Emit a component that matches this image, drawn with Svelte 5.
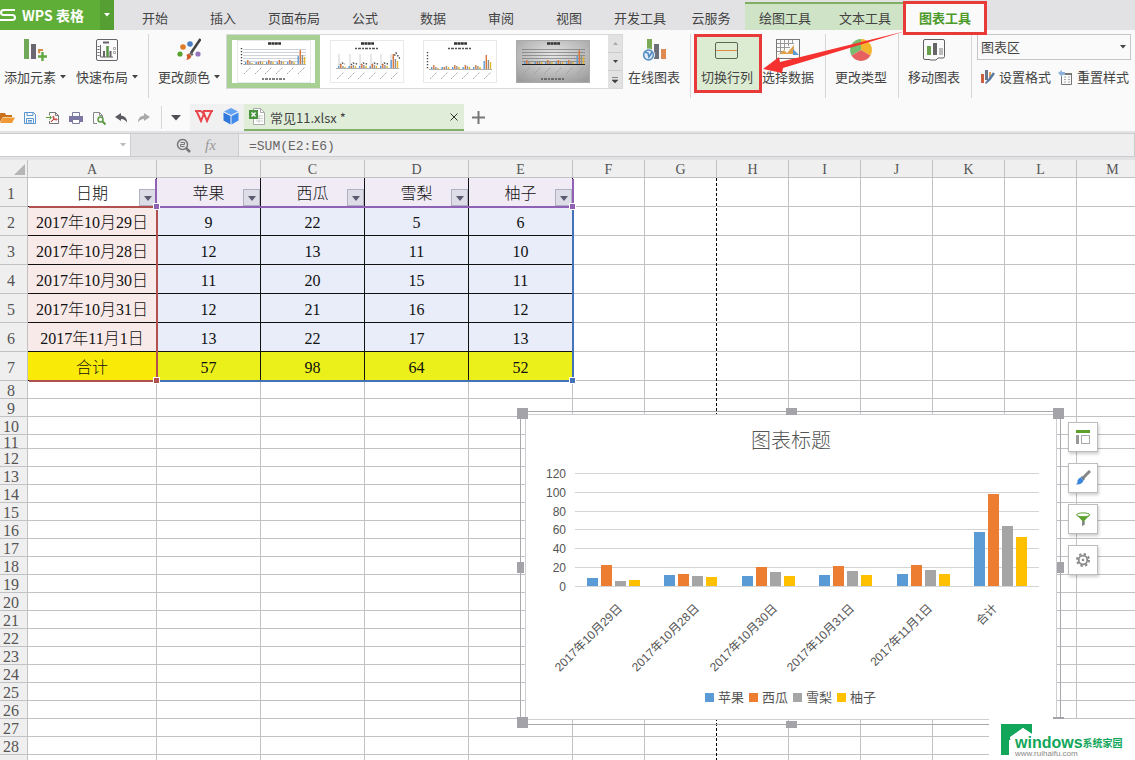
<script>
let tabs = ['开始', '插入', '页面布局', '公式', '数据', '审阅', '视图', '开发工具', '云服务'];
let toolTabs = ['绘图工具', '文本工具', '图表工具'];
let activeTab = $state('图表工具');

let nameBox = $state('');
let formula = $state('=SUM(E2:E6)');
let chartPart = $state('图表区');
let layout = $state(0);

let columns = ['A', 'B', 'C', 'D', 'E', 'F', 'G', 'H', 'I', 'J', 'K', 'L', 'M'];
let head = ['日期', '苹果', '西瓜', '雪梨', '柚子'];
let records = [
    ['2017年10月29日', 9, 22, 5, 6],
    ['2017年10月28日', 12, 13, 11, 10],
    ['2017年10月30日', 11, 20, 15, 11],
    ['2017年10月31日', 12, 21, 16, 12],
    ['2017年11月1日', 13, 22, 17, 13],
    ['合计', 57, 98, 64, 52]
];
let rest = columns.slice(5);
let emptyRows = [...Array.from({ length: 21 }, (_, i) => i + 8), ''];

// chart
let colors = ['#5b9bd5', '#ed7d31', '#a5a5a5', '#ffc000'];
let ticks = [120, 100, 80, 60, 40, 20, 0];
const base = 171;
const unit = 113 / 120;
const groupX = (i) => 61 + Math.round(i * 77.4);
const barH = (v) => Math.round(v * unit);
const labelX = (i) => groupX(i) + (i === records.length - 1 ? 24 : 36);

// bars of the small previews in the gallery
let mini = [2, 4, 2, 1, 0, 2, 2, 3, 2, 0, 2, 4, 3, 2, 0, 2, 4, 3, 2, 0, 2, 4, 3, 2, 0, 8, 14, 9, 7];
let miniColors = ['#5b9bd5', '#d9773a', '#8f8f8f', '#e5b52c', '#fff'];
</script>

{#snippet caret()}
    <svg class="caret" width="6" height="4" viewBox="0 0 6 4"><path d="M0 0h6L3 3.5z" fill="#444" /></svg>
{/snippet}

{#snippet thumb(kind)}
    <svg width="74" height="43" viewBox="0 0 74 43">
        <defs>
            <radialGradient id="grey" cx="50%" cy="35%" r="75%">
                <stop offset="0" stop-color="#e6e6e6" />
                <stop offset="1" stop-color="#9c9c9c" />
            </radialGradient>
        </defs>
        <rect x=".5" y=".5" width="73" height="42" fill={kind === 3 ? 'url(#grey)' : '#fff'} stroke={kind === 3 ? '#aaa' : '#e9e9e9'} />
        <path d="M31 3.5h13" stroke="#333" stroke-width="2.4" stroke-dasharray="3 .4" />
        {#if kind === 1 || kind === 2}
            <path d="M25 8.500h24" stroke="#555" stroke-width="1.400" stroke-dasharray="2 1 3 1" />
        {/if}
        {#if kind === 0 || kind === 3}
            {#each [9, 12, 15, 18, 21] as y}
                <path d="M6 {y + .5}h63" stroke={kind === 3 ? '#777' : '#b9c0cc'} stroke-width=".7" />
            {/each}
            <path d="M25 39h24" stroke="#555" stroke-width="1.400" stroke-dasharray="2 1 3 1" />
        {/if}
        {#if kind === 0 || kind === 2}
            <path d="M4.500 {kind === 2 ? 12 : 8}v18" stroke="#444" stroke-width="1.400" stroke-dasharray="1.200 1.800" />
        {/if}
        {#if kind === 1}
            {#each [9, 20, 30, 41, 51, 61] as x}
                <path d="M{x} 14v14" stroke="#bbb" stroke-width=".7" />
            {/each}
            <path d="M10 25l2-2 3 1M21 25l2-2 4 1M31 25l2-2 4 1M42 25l2-2 4 1M52 25l2-2 4 1M63 18l3-5 4 6" stroke="#444" fill="none" stroke-width="1.400" stroke-dasharray="1.400 1.400" />
        {/if}
        {#each mini as h, i}
            <rect x={8 + i * 2.1} y={(kind === 2 ? 29 : kind === 1 ? 28 : 24) - h} width="1.400" height={h} fill={miniColors[i % 5]} />
        {/each}
        <path d="M6 {kind === 2 ? 29.5 : kind === 1 ? 28.5 : 24.5}h63" stroke={kind === 3 ? '#222' : '#999'} stroke-width={kind === 3 ? 1.2 : .8} />
        {#each [7, 18, 28, 39, 50, 61] as x}
            <path d="M{x} {kind === 0 || kind === 3 ? 34 : 39}l7-7" stroke="#999" stroke-width=".9" stroke-dasharray="1.600 .8" />
        {/each}
    </svg>
{/snippet}

<div class="app">
    <header class="tabbar">
        <button class="brand">
            <svg width="16" height="14" viewBox="0 0 16 14"><path d="M15 2H4Q1 2 1 4.500T4 7h8q3 0 3 2.500T12 12H0" fill="none" stroke="#fff" stroke-width="2" /></svg>
            <span>WPS 表格</span>
        </button>
        <button class="brand__more" aria-label="菜单"><svg width="6" height="4" viewBox="0 0 6 4"><path d="M0 0h6L3 3.500z" fill="#fff" /></svg></button>
        <nav class="tabs">
            {#each tabs as tab}
                <button class="tab" onclick={() => (activeTab = tab)}>{tab}</button>
            {/each}
            {#each toolTabs as tab}
                <button class="tab tab--tool" class:active={activeTab === tab} class:marked={tab === '图表工具'} onclick={() => (activeTab = tab)}>{tab}</button>
            {/each}
        </nav>
    </header>

    <section class="ribbon">
        <button class="cmd">
            <svg width="24" height="24" viewBox="0 0 24 24">
                <path d="M1 1h5v20H1z" fill="#6fa857" /><path d="M8 6h5v15H8z" fill="#6b6672" /><path d="M15 11h5v7h-5z" fill="#d58a48" />
                <path d="M19.500 13v9M15 17.500h9" stroke="#fafafa" stroke-width="4.500" /><path d="M19.500 14v9M15 18.500h9" stroke="#62a744" stroke-width="2.400" />
            </svg>
            <span>添加元素{@render caret()}</span>
        </button>
        <button class="cmd">
            <svg width="24" height="24" viewBox="0 0 24 24" fill="none" stroke="#66646b">
                <rect x="1.500" y="1.500" width="21" height="21" rx="1.500" /><path d="M8 4.500h6" stroke-width="2" />
                <path d="M5.500 7v12H18" /><path d="M3.500 8v11" stroke-dasharray="1 2" stroke-width="2" /><path d="M9 13v6M15.500 13v6" stroke-width="2" /><path d="M12.500 8v11" stroke="#569345" stroke-width="2.500" />
                <path d="M18.500 9.500h2v2h-2zM18.500 13.500h2v2h-2z" stroke="#aaa" />
            </svg>
            <span>快速布局{@render caret()}</span>
        </button>
        <i class="sep"></i>
        <button class="cmd">
            <svg width="24" height="24" viewBox="0 0 24 24">
                <circle cx="6" cy="9" r="2.800" fill="#e07b28" /><circle cx="13" cy="6" r="2.800" fill="#4a7fc4" /><circle cx="3" cy="16" r="2.600" fill="#58a32c" /><circle cx="21" cy="16" r="2.600" fill="#9573bd" />
                <path d="M23.500 1L14 15" stroke="#444" stroke-width="2.600" /><path d="M14 14l2.500 2-1.500 2-3-2.500z" fill="#666" /><path d="M11.500 15.500l3 2.500q-1 3.500-5.500 4 2-2 .5-5z" fill="#cf5b2b" />
            </svg>
            <span>更改颜色{@render caret()}</span>
        </button>
        <div class="gallery">
            {#each [0, 1, 2, 3] as kind}
                <button class="gallery__item" class:chosen={layout === kind} aria-label={'样式 ' + (kind + 1)} onclick={() => (layout = kind)}>{@render thumb(kind)}</button>
            {/each}
            <div class="gallery__scroll">
                <button aria-label="上一行"><svg width="5" height="3" viewBox="0 0 5 3"><path d="M0 3h5L2.500 0z" fill="#aaa" /></svg></button>
                <button aria-label="下一行"><svg width="5" height="3" viewBox="0 0 5 3"><path d="M0 0h5L2.500 3z" fill="#444" /></svg></button>
                <button aria-label="更多"><svg width="6" height="6" viewBox="0 0 6 6"><path d="M0 .5h6M0 3h6L3 6z" fill="#444" stroke="#444" stroke-width=".6" /></svg></button>
            </div>
        </div>
        <button class="cmd">
            <svg width="24" height="24" viewBox="0 0 24 24">
                <path d="M5 1h5v13H5z" fill="#7aaa58" /><path d="M12 6h5v15h-5z" fill="#6b6f7a" /><path d="M19 11h5v10h-5z" fill="#de8a52" />
                <circle cx="6.500" cy="17" r="6.500" fill="#fafafa" /><circle cx="6.500" cy="17" r="4.900" fill="#dfeafa" stroke="#4f8ac0" stroke-width="1.500" /><path d="M3 14l3 1 1 4 3-5" stroke="#4f8ac0" stroke-width="1.600" fill="none" />
            </svg>
            <span>在线图表</span>
        </button>
        <i class="sep sep--tight"></i>
        <button class="cmd cmd--switch">
            <svg width="24" height="24" viewBox="0 0 24 24" fill="none"><rect x=".5" y="4.500" width="22" height="16" rx="1.500" stroke="#5b6558" /><path d="M1 12.500h21" stroke="#de8c45" /></svg>
            <span>切换行列</span>
        </button>
        <button class="cmd cmd--select">
            <svg width="24" height="24" viewBox="0 0 24 24" fill="none">
                <rect x=".5" y="1.500" width="23" height="19" stroke="#777" /><path d="M4.500 2v14M8.500 2v10M12.500 2v6M16.500 2v4M1 5.500h17M1 9.500h13M1 13.500h7" stroke="#999" />
                <path d="M2 17l6-5 3 3 7-8v9H2z" fill="#dda04d" /><path d="M17 11v6h6z" fill="#5b9bd5" />
            </svg>
            <span>选择数据</span>
        </button>
        <i class="sep sep--select"></i>
        <button class="cmd cmd--wide">
            <svg width="24" height="24" viewBox="0 0 24 24"><path d="M12 12V1A11 11 0 0 0 2.500 17.500z" fill="#76bd6f" /><path d="M12 12V1a11 11 0 0 1 9.500 16.500z" fill="#f4b52e" /><path d="M12 12l9.500 5.500a11 11 0 0 1-19 0z" fill="#e66060" /></svg>
            <span>更改类型</span>
        </button>
        <i class="sep sep--flat"></i>
        <button class="cmd cmd--wide">
            <svg width="24" height="24" viewBox="0 0 24 24">
                <path d="M8 21.500H3q-1.500 0-1.500-1.500V3q0-1.500 1.500-1.500h18q1.500 0 1.500 1.500v15.500q0 1.500-1.500 1.500h-5l-2 2H8" fill="none" stroke="#606060" />
                <path d="M5 8h4v9H5z" fill="#68a04e" /><path d="M11 5h4v12h-4z" fill="#666" /><path d="M17 10h4v7h-4z" fill="#bbb" />
            </svg>
            <span>移动图表</span>
        </button>
        <i class="sep sep--flat"></i>
        <div class="part">
            <div class="part__combo">
                <select bind:value={chartPart} aria-label="图表元素">
                    <option>图表区</option>
                    <option>绘图区</option>
                </select>
                {@render caret()}
            </div>
            <div class="part__actions">
                <button>
                    <svg width="15" height="15" viewBox="0 0 15 15"><path d="M1 4h3v9H1z" fill="#c9603f" /><path d="M5 0h3v10H5z" fill="#69788e" /><path d="M9 2h2v5H9z" fill="#e0a060" /><path d="M14 3l-5 7" stroke="#5577a0" stroke-width="2.400" /><path d="M8 9l2 1.500-4 3.500-1-1z" fill="#5577a0" /></svg>
                    设置格式
                </button>
                <button>
                    <svg width="15" height="15" viewBox="0 0 15 15" fill="none"><path d="M3.500 6v8.500h10v-11H7" stroke="#777" /><path d="M6 7h2M10 7h2M6 9.500h2M10 9.500h2M6 12h2M10 12h2" stroke="#aaa" /><path d="M7 4h7" stroke="#777" stroke-width="2" /><path d="M0 3l4-3v2h3v3H4v2z" fill="#8fb3dc" /></svg>
                    重置样式
                </button>
            </div>
        </div>
        <svg class="arrow" width="144" height="44" viewBox="0 0 144 44"><path d="M0 38L16 26l1 5L143 0 20 37l-1 5z" fill="#f5322f" /></svg>
    </section>

    <div class="docbar">
        <div class="quick">
            <button aria-label="打开"><svg width="15" height="14" viewBox="0 0 15 14"><path d="M0 2h5l1 2h6v2H3L0 11z" fill="#c9731f" /><path d="M3 6.500h12L12 12H0z" fill="#f19a35" /></svg></button>
            <button aria-label="保存"><svg width="14" height="14" viewBox="0 0 14 14" fill="none" stroke="#5b96ce"><path d="M1.500 1.500h9l2 2v9h-11zM4 1.500v3h6v-3M3.500 7.500h7v5h-7zM5 9.500h4M5 11h4" /></svg></button>
            <button aria-label="输出为PDF"><svg width="14" height="14" viewBox="0 0 14 14" fill="none"><path d="M3.500 4V1.500h6l3 3v8h-9V10M9.500 1.500v3h3" stroke="#777" /><path d="M0 6.500h5M3.500 4.500l2 2-2 2" stroke="#58a03c" /><path d="M5 11q4-3 3-5.500-1.500-1-1 1 1 3 4 2.500 1-1.500-2-1-3 .5-4 3" stroke="#c9443c" /></svg></button>
            <button aria-label="打印"><svg width="14" height="14" viewBox="0 0 14 14"><path d="M3.500 1.500h7v4h-7z" fill="#fff" stroke="#7d7a9f" /><path d="M0 5h14v6H0z" fill="#7b78a3" /><path d="M3.500 8.500h7v4h-7z" fill="#fff" stroke="#7d7a9f" /></svg></button>
            <button aria-label="打印预览"><svg width="14" height="14" viewBox="0 0 14 14" fill="none"><path d="M5 12.500H1.500v-11h6l3 3V6M7.500 1.500v3h3" stroke="#888" /><circle cx="8.500" cy="8.500" r="2.500" stroke="#5d9a45" stroke-width="1.500" /><path d="M10.500 10.500l3 3" stroke="#5d9a45" stroke-width="2" /></svg></button>
            <button aria-label="撤销"><svg width="13" height="14" viewBox="0 0 13 14"><path d="M0 6l6-4v2.500q6 .5 6 7Q10 8 6 8v2z" fill="#5d5a62" /></svg></button>
            <button aria-label="恢复"><svg width="13" height="14" viewBox="0 0 13 14"><path d="M12 6L6 2v2.500q-6 .5-6 7Q2 8 6 8v2z" fill="#aaa" /></svg></button>
            <i class="quick__sep"></i>
            <button class="quick__more" aria-label="自定义"><svg width="10" height="6" viewBox="0 0 10 6"><path d="M0 0h10L5 5.500z" fill="#4f4d55" /></svg></button>
        </div>
        <div class="apps">
            <button aria-label="WPS"><svg width="18" height="13" viewBox="0 0 18 13" fill="none" stroke="#e8484e" stroke-width="2"><path d="M0 1h6M1.500 1l4.500 10L9 3.500 12 11l4.500-10M8 1h4M12 1h6M6 1l3 3" /></svg></button>
            <button aria-label="云文档"><svg width="16" height="17" viewBox="0 0 16 17"><path d="M8 0l7 3.500L8 7 1 3.500z" fill="#62a2f2" /><path d="M.5 4.500l7 3.500v8.500l-7-4z" fill="#2f78dc" /><path d="M15.500 4.500l-7 3.500v8.500l7-4z" fill="#3f8aea" /></svg></button>
        </div>
        <div class="doctab">
            <svg width="16" height="17" viewBox="0 0 16 17"><path d="M4.500.500h7l4 4v12h-11z" fill="#fff" stroke="#aaa" /><path d="M11.500.500v4h4" fill="none" stroke="#aaa" /><path d="M7 8h7M7 10.500h7M7 13h7M10 7v8" stroke="#ccc" /><path d="M0 2h9v9H0z" fill="#4a9440" /><path d="M2.500 4.500l4 4M6.500 4.500l-4 4" stroke="#fff" stroke-width="1.400" /></svg>
            <span>常见11.xlsx *</span>
            <button aria-label="关闭"><svg width="8" height="8" viewBox="0 0 8 8"><path d="M.5.500l7 7M7.500.500l-7 7" stroke="#333" /></svg></button>
        </div>
        <button class="newtab" aria-label="新建"><svg width="13" height="13" viewBox="0 0 13 13"><path d="M6.500 0v13M0 6.500h13" stroke="#777" stroke-width="2" /></svg></button>
    </div>

    <div class="formulabar">
        <div class="namebox">
            <input bind:value={nameBox} aria-label="名称框">
            <svg width="6" height="4" viewBox="0 0 6 4"><path d="M0 0h6L3 3.500z" fill="#bbb" /></svg>
        </div>
        <div class="fx">
            <button aria-label="查找"><svg width="15" height="15" viewBox="0 0 15 15" fill="none" stroke="#777"><circle cx="6.500" cy="6.500" r="5" stroke-width="1.500" /><path d="M10 10l4 4" stroke-width="2.500" /><path d="M4.500 4.500h4v2h-4v2h4" /></svg></button>
            <button class="fx__fn">fx</button>
        </div>
        <input class="formula" bind:value={formula} aria-label="编辑栏">
    </div>

    <main class="sheet">
        <table>
            <colgroup>
                <col class="w-num"><col class="w-a">
                {#each head.slice(1) as _}<col class="w-data">{/each}
                {#each rest as _}<col class="w-std">{/each}
            </colgroup>
            <thead>
                <tr>
                    <th class="corner"><svg width="11" height="11" viewBox="0 0 11 11"><path d="M11 0v11H0z" fill="#b5b5b5" /></svg></th>
                    {#each columns as c}<th>{c}</th>{/each}
                </tr>
            </thead>
            <tbody>
                <tr class="tall">
                    <th>1</th>
                    {#each head as h, i}
                        <td class="cell" class:series={i > 0}>{h}<button class="filter" aria-label={'筛选' + h}><svg width="8" height="5" viewBox="0 0 8 5"><path d="M0 0h8L4 5z" fill="#5d5a70" /></svg></button></td>
                    {/each}
                    {#each rest as _}<td></td>{/each}
                </tr>
                {#each records as row, r}
                    <tr class="tall" class:total={r === records.length - 1}>
                        <th>{r + 2}</th>
                        {#each row as v, i}<td class="cell {i ? 'value' : 'date'}">{v}</td>{/each}
                        {#each rest as _}<td></td>{/each}
                    </tr>
                {/each}
                {#each emptyRows as n}
                    <tr class:short={n === 11}>
                        <th>{n}</th>
                        {#each columns as _}<td></td>{/each}
                    </tr>
                {/each}
            </tbody>
        </table>

        <i class="pagebreak"></i>
        <div class="range range--value"><i class="se"></i></div>
        <div class="range range--date"><i class="se"></i></div>
        <div class="range range--name"><i class="sw"></i><i class="se"></i></div>

        <div class="chart">
            {#each ['nw', 'n', 'ne', 'w', 'e', 'sw', 's', 'se'] as h}<i class="grip {h}"></i>{/each}
            <svg class="chart__body" width="530" height="304" viewBox="0 0 530 304">
                <text x="265" y="33" text-anchor="middle" class="chart__title">图表标题</text>
                {#each ticks as t}
                    <path d="M49 {base - Math.round(t * unit) + .5}H513" stroke="#d4d4d4" />
                    <text x="40" y={base - Math.round(t * unit) + 5} text-anchor="end" class="chart__tick">{t}</text>
                {/each}
                {#each records as row, i}
                    {#each row.slice(1) as v, s}
                        <rect x={groupX(i) + s * 14} y={base - barH(v)} width="11" height={barH(v)} fill={colors[s]} />
                    {/each}
                    <text text-anchor="end" class="chart__cat" transform="translate({labelX(i)} 194) rotate(-45)">{row[0]}</text>
                {/each}
                {#each head.slice(1) as name, s}
                    <rect x={179 + s * 44} y="278" width="9" height="9" fill={colors[s]} />
                    <text x={192 + s * 44} y="287" class="chart__legend">{name}</text>
                {/each}
            </svg>
            <div class="chart__tools">
                <button aria-label="图表元素"><svg width="16" height="16" viewBox="0 0 16 16"><path d="M1 1h14v3H1z" fill="#5ba12c" /><path d="M1 6h3v9H1z" fill="#999" /><rect x="6.500" y="6.500" width="8" height="8" fill="none" stroke="#aaa" /></svg></button>
                <button aria-label="图表样式"><svg width="16" height="16" viewBox="0 0 16 16"><path d="M15 1L8 8" stroke="#888" stroke-width="3" /><path d="M7 6l3 3-1.500 1.500-3-3z" fill="#6f7f92" /><path d="M5.500 7.500l3 3Q7 15 1 14.500 3 13 2.500 10.500 3.500 8 5.500 7.500z" fill="#3b87dc" /></svg></button>
                <button aria-label="图表筛选器"><svg width="16" height="16" viewBox="0 0 16 16"><path d="M1.500 4L7 9.500V15l2.500-1.500v-4L15 4z" fill="#5ba12c" /><path d="M7 10h2.500v3.500L7 15z" fill="#8a8a8a" /><ellipse cx="8.200" cy="3.800" rx="6.600" ry="1.900" fill="#fff" stroke="#5ba12c" /></svg></button>
                <button aria-label="设置"><svg width="16" height="16" viewBox="0 0 16 16" fill="none" stroke="#8a8a8a"><circle cx="8" cy="8" r="6" stroke-width="2" stroke-dasharray="2.356 2.356" /><circle cx="8" cy="8" r="4.300" stroke-width="1.800" /><circle cx="8" cy="8" r="1.300" fill="#8a8a8a" stroke="none" /></svg></button>
            </div>
        </div>

        <a class="site" href="http://www.ruihaifu.com">
            <svg width="31" height="31" viewBox="0 0 31 31"><path d="M0 0h31v10l-9-6-12 9v3H8v15H0z" fill="#12a65b" /><path d="M9 13l13-9 9 6v3l-9-6-13 9z" fill="#fff" /></svg>
            <div class="site__text">
                <p><b>windows</b>系统家园</p>
                <small>www.ruihaifu.com</small>
            </div>
        </a>
    </main>
</div>

<style>
:global(body) {
    margin: 0;
}

.app {
    display: flex;
    flex-direction: column;
    height: 100vh;
    overflow: hidden;
    background: #fafafa;
    color: #444;
    font-family: "Noto Sans CJK SC", sans-serif;
    font-size: 13px;
    line-height: 18px;
}

button {
    display: flex;
    align-items: center;
    justify-content: center;
    border: none;
    background: none;
    padding: 0;
    color: inherit;
    font: inherit;
    white-space: nowrap;
    cursor: pointer;
}

svg {
    flex: none;
}

/* tabs */
.tabbar {
    display: flex;
    flex: none;
    height: 30px;
    background: #e2e2e4;
}

.brand {
    gap: 6px;
    width: 100px;
    justify-content: flex-start;
    background: #5fae38;
    color: #fff;
    font-size: 14px;
    font-weight: 700;
}

.brand__more {
    width: 14px;
    background: #56a033;
}

.tabs {
    display: flex;
    padding-left: 7px;
}

.tab {
    min-width: 68px;
    padding: 6px 11px 0;
}

.tab--tool {
    position: relative;
    min-width: 80px;
    border-top: 2px solid #7fae62;
    margin-top: 2px;
    padding-top: 2px;
    background: #cfe3c6;
}

.tab--tool.active {
    background: #fafafa;
    color: #4d9a2a;
    font-weight: 700;
}

.tab--tool.marked::after {
    content: "";
    position: absolute;
    z-index: 2;
    inset: -3px -2px -5px -2px;
    border: 3px solid #e93a3a;
}

/* ribbon */
.ribbon {
    position: relative;
    display: flex;
    flex: none;
    align-items: flex-start;
    height: 70px;
    padding-top: 4px;
}

.cmd {
    flex: none;
    flex-direction: column;
    gap: 5px;
    min-width: 64px;
    height: 59px;
    justify-content: flex-start;
    padding: 4px 2px 0 0;
    box-sizing: border-box;
}

.cmd:has(.caret), .cmd--wide {
    min-width: 72px;
}

.cmd span {
    display: flex;
    align-items: center;
    gap: 4px;
    line-height: 20px;
}

.cmd--switch {
    width: 68px;
    border: 3px solid #e93a3a;
    padding-top: 1px;
    background: #dcecd2;
}

.cmd--select {
    min-width: 54px;
}

.sep {
    flex: none;
    width: 1px;
    height: 64px;
    margin: 0 5px 0 4px;
    background: #d6d6d8;
}

.sep--tight {
    margin: 0 3px;
}

.sep--select {
    margin: 0 0 0 9px;
}

.sep--flat {
    margin: 0;
}

.gallery {
    display: flex;
    flex: none;
    height: 55px;
    border: 1px solid #d8d8d8;
    box-sizing: border-box;
    background: #fff;
}

.gallery__item {
    width: 93px;
    height: 53px;
    box-sizing: border-box;
}

.gallery__item.chosen {
    border: 5px solid #a9d094;
}

.gallery__scroll {
    display: flex;
    flex-direction: column;
    width: 14px;
    gap: 1px;
    background: #ccc;
    margin-left: 9px;
}

.gallery__scroll button {
    flex: 1;
    background: #e2e2e2;
}

.part {
    flex: 1;
    min-width: 154px;
    max-width: 154px;
    margin-left: 5px;
}

.part__combo {
    display: flex;
    align-items: center;
    height: 24px;
    border: 1px solid #c6c6c8;
    padding-right: 4px;
}

.part__combo select {
    flex: 1;
    appearance: none;
    border: none;
    background: none;
    padding: 0 3px;
    color: inherit;
    font: inherit;
}

.part__actions {
    display: flex;
    justify-content: space-between;
    margin: 8px 2px 0 3px;
}

.part__actions button {
    gap: 4px;
}

.arrow {
    position: absolute;
    z-index: 3;
    left: 763px;
    top: 1px;
}

/* document row */
.docbar {
    display: flex;
    flex: none;
    height: 27px;
}

.quick {
    display: flex;
    align-items: center;
    width: 190px;
}

.quick button {
    width: 23px;
    justify-content: flex-start;
}

.quick__sep {
    width: 1px;
    height: 23px;
    background: #d6d6d8;
}

.quick .quick__more {
    margin-left: 9px;
    width: 12px;
}

.apps {
    display: flex;
    align-items: center;
    justify-content: space-around;
    width: 54px;
    padding-bottom: 3px;
    background: #f1f1f2;
    box-sizing: border-box;
}

.doctab {
    display: flex;
    align-items: center;
    width: 220px;
    padding: 0 6px 0 5px;
    border-bottom: 2px solid #82b169;
    box-sizing: border-box;
    background: #e0eed9;
}

.doctab span {
    flex: 1;
    margin: 2px 0 0 5px;
}

.newtab {
    margin-left: 8px;
}

/* formula bar */
.formulabar {
    display: flex;
    flex: none;
    height: 29px;
    padding: 2px 0 3px;
    box-sizing: border-box;
    background: #e2e2e4;
}

.namebox {
    display: flex;
    align-items: center;
    width: 131px;
    padding-right: 4px;
    border: solid #cdcdcf;
    border-width: 1px 1px 1px 0;
    box-sizing: border-box;
    background: #fff;
}

.formulabar input {
    flex: 1;
    min-width: 0;
    border: none;
    outline: none;
    background: none;
}

.fx {
    display: flex;
    align-items: center;
    gap: 14px;
    width: 107px;
    padding-left: 45px;
    box-sizing: border-box;
    border: solid #cdcdcf;
    border-width: 1px 0;
}

.fx__fn {
    color: #999;
    font: italic 15px "Liberation Serif", serif;
}

.formulabar .formula {
    border: 1px solid #cdcdcf;
    padding: 2px 10px 0;
    background: #efefef;
    color: #666;
    font: 13px "Liberation Mono", monospace;
}

/* sheet */
.sheet {
    position: relative;
    flex: 1;
    overflow: hidden;
    background: #fff;
}

table {
    width: 0;
    table-layout: fixed;
    border-collapse: separate;
    border-spacing: 0;
    font-family: "Liberation Serif", "Noto Sans CJK SC", serif;
    font-size: 16px;
}

.w-num {
    width: 28px;
}

.w-a {
    width: 129px;
}

.w-data {
    width: 104px;
}

.w-std {
    width: 72px;
}

td, th {
    height: 18px;
    padding: 2px 0 0;
    border: solid #c2c2c4;
    border-width: 0 1px 1px 0;
    box-sizing: border-box;
    text-align: center;
    line-height: 15px;
}

th {
    background: #efefef;
    color: #555;
    font-weight: 400;
}

thead th {
    font-size: 14px;
}

tbody th {
    padding-right: 5px;
}

.corner svg {
    display: block;
    margin-left: 14px;
}

.short td, .short th {
    height: 14px;
    line-height: 11px;
}

.tall td, .tall th {
    height: 29px;
    padding-top: 3px;
    line-height: 25px;
}

.cell {
    position: relative;
    border-color: #111;
    color: #111;
    font-weight: 300;
}

.series {
    background: #f1ebf6;
}

.date {
    background: #f8eae9;
}

.value {
    background: #e8edf9;
}

.total .date {
    background: #f9ea08;
}

.total .value {
    background: #ebf01a;
}

.filter {
    position: absolute;
    right: 0;
    bottom: 0;
    width: 17px;
    height: 17px;
    padding-top: 2px;
    border: 1px solid #b3b2c2;
    box-sizing: border-box;
    background: #dddde8;
}

.pagebreak {
    position: absolute;
    left: 716px;
    top: 18px;
    bottom: 0;
    width: 1px;
    background: repeating-linear-gradient(#000 0 3px, #fff 3px 5px);
}

/* coloured outlines of the ranges that feed the chart */
.range {
    position: absolute;
    border: 0 solid;
}

.range--date {
    left: 29px;
    top: 46px;
    width: 127px;
    height: 172px;
    border-width: 2px 2px 2px 0;
    color: #b0504f;
}

.range--value {
    left: 157px;
    top: 47px;
    width: 415px;
    height: 173px;
    border-width: 0 2px 2px 0;
    color: #4472b8;
}

.range--name {
    left: 155px;
    top: 19px;
    width: 415px;
    height: 27px;
    border-width: 0 2px 2px 2px;
    color: #8f62b5;
}

.range i {
    position: absolute;
    width: 5px;
    height: 5px;
    border: 1px solid #fff;
    background: currentColor;
}

.range .se {
    right: -4px;
    bottom: -4px;
}

.range .sw {
    left: -4px;
    bottom: -4px;
}

/* chart */
.chart {
    position: absolute;
    left: 520px;
    top: 251px;
    border: 1px solid #a9a9ad;
    padding: 3px 4px 5px 5px;
}

.chart__body {
    display: block;
    background: #fff;
    outline: 1px solid #cfcfd1;
    font-family: "Liberation Sans", "Noto Sans CJK SC", sans-serif;
    fill: #555;
}

.chart__title {
    font-size: 20px;
    font-weight: 300;
}

.chart__tick, .chart__cat {
    font-size: 12px;
}

.chart__legend {
    font-size: 13px;
}

.grip {
    position: absolute;
    width: 11px;
    height: 7px;
    background: #a3a3a9;
}

.nw, .ne, .sw, .se {
    height: 11px;
}

.nw, .n, .ne {
    top: -4px;
}

.sw, .s, .se {
    bottom: -4px;
}

.nw, .sw {
    left: -4px;
}

.ne, .se {
    right: -4px;
}

.n, .s {
    left: calc(50% - 5px);
}

.w, .e {
    top: calc(50% - 6px);
    width: 7px;
    height: 11px;
}

.w {
    left: -4px;
}

.e {
    right: -4px;
}

.chart__tools {
    position: absolute;
    left: 547px;
    top: 10px;
    display: flex;
    flex-direction: column;
    gap: 11px;
}

.chart__tools button {
    width: 30px;
    height: 30px;
    border: 1px solid #bdbdc0;
    box-sizing: border-box;
    background: #fff;
    box-shadow: 1px 2px 3px rgba(0, 0, 0, 0.2);
}

.site {
    position: absolute;
    right: 0;
    bottom: 0;
    display: flex;
    width: 134px;
    height: 36px;
    padding: 5px 0 0 12px;
    background: #fff;
    text-decoration: none;
}

.site__text {
    margin: 12px 0 0 -17px;
    color: #12a65b;
}

.site p {
    display: flex;
    align-items: center;
    margin: 0;
    font-size: 10px;
    font-weight: 700;
    line-height: 14px;
}

.site b {
    font-family: "Liberation Sans", sans-serif;
    font-size: 16px;
}

.site small {
    display: block;
    color: #888;
    font-family: "Liberation Sans", sans-serif;
    font-size: 8px;
    line-height: 8px;
}
</style>
